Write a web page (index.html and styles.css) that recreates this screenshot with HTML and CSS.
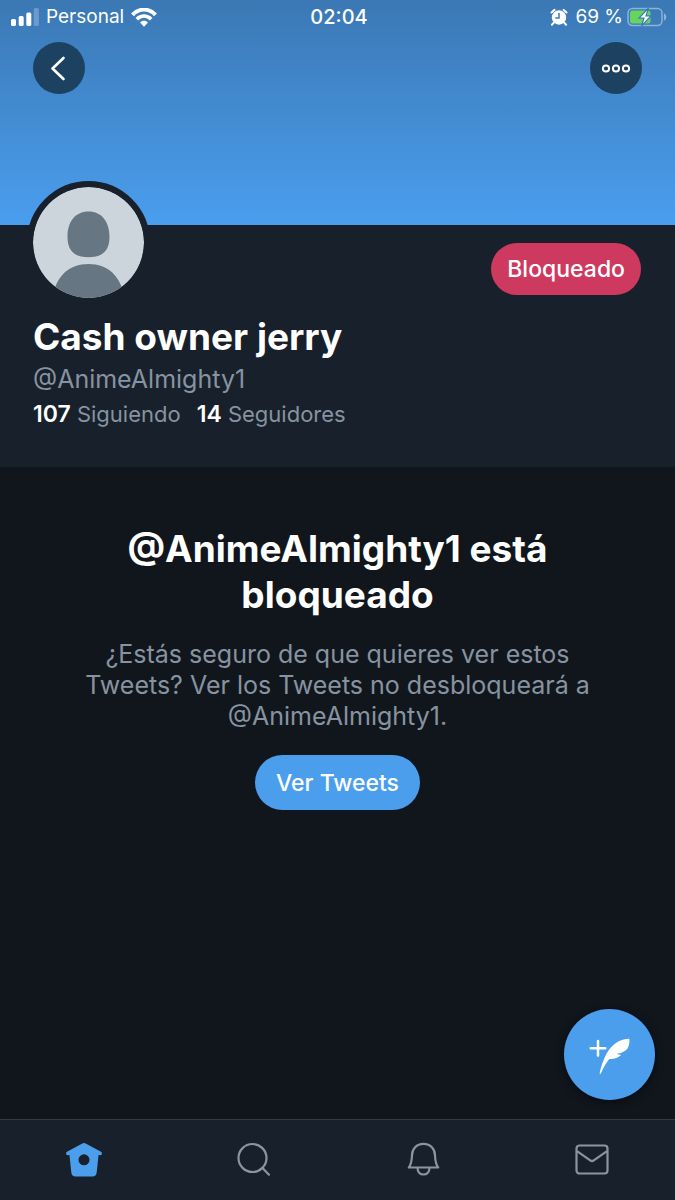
FILE: index.html
```html
<!DOCTYPE html>
<html lang="es">
<head>
<meta charset="utf-8">
<meta name="viewport" content="width=device-width, initial-scale=1">
<title>Cash owner jerry</title>
<link rel="stylesheet" href="styles.css">
</head>
<body>
<div class="app">
  <header class="banner">
    <div class="status">
      <div class="status-left">
        <svg width="28" height="18" viewBox="0 0 28 18" fill="#fff" aria-hidden="true"><rect x="0" y="11" width="5" height="7" rx="1.5"/><rect x="7.700" y="8" width="5" height="10" rx="1.500"/><rect x="15.300" y="4.500" width="5" height="13.500" rx="1.500"/><rect x="22.800" y="0" width="5" height="18" rx="1.500" opacity=".25"/></svg>
        <span>Personal</span>
        <svg width="26" height="19" viewBox="0 0 26 19" fill="none" stroke="#fff" aria-hidden="true"><path d="M1.500 6.800C8-.2 18-.2 24.500 6.800" stroke-width="4"/><path d="M5.800 11.200C9.800 7 16.200 7 20.200 11.200" stroke-width="3.600"/><path d="M9 14.500c2.300-2.200 5.700-2.200 8 0l-4 4.200z" fill="#fff" stroke="none"/></svg>
      </div>
      <time class="clock">02:04</time>
      <div class="status-right">
        <svg width="18" height="18" viewBox="0 0 18 18" aria-hidden="true"><circle cx="9" cy="9.500" r="7.200" fill="#fff"/><path d="M1.500 4.500 4.500 1.800M16.500 4.500l-3-2.700M3.500 15l-1.600 1.700M14.500 15l1.600 1.700" stroke="#fff" stroke-width="2" stroke-linecap="round"/><path d="M9 5v5H5.300" fill="none" stroke="#3c7ab7" stroke-width="1.500"/></svg>
        <span>69 %</span>
        <svg width="40" height="20" viewBox="0 0 40 20" aria-hidden="true"><rect x="1" y="1.500" width="34" height="17" rx="4.500" fill="none" stroke="#8db3d8" stroke-width="1.500"/><path d="M37 6.500c3 1 3 6 0 7z" fill="#8db3d8"/><rect x="3" y="3.500" width="20.500" height="13" rx="2.500" fill="#65d55f"/><path d="M21.500 1 12 11.200h5L14.500 19 24 8.800h-5z" fill="#fff" stroke="#3c7ab7" stroke-width="1.200"/></svg>
      </div>
    </div>
    <div class="toolbar">
      <button class="round" type="button" aria-label="Atrás"><svg width="52" height="52" viewBox="0 0 52 52" fill="none" stroke="#fff" stroke-width="2.600" stroke-linecap="round" stroke-linejoin="round"><path d="M30.500 16 19.500 26.500l11 10.500"/></svg></button>
      <button class="round" type="button" aria-label="Más opciones"><svg width="52" height="52" viewBox="0 0 52 52" fill="none" stroke="#fff" stroke-width="2"><circle cx="16" cy="26.500" r="3.100"/><circle cx="26" cy="26.500" r="3.100"/><circle cx="36" cy="26.500" r="3.100"/></svg></button>
    </div>
  </header>
  <section class="profile">
    <div class="profile-top">
      <svg class="avatar" viewBox="0 0 111 111" role="img" aria-label="Foto de perfil"><defs><clipPath id="disc"><circle cx="55.500" cy="55.500" r="55.500"/></clipPath></defs><g clip-path="url(#disc)"><path fill="#ccd5dc" d="M0 0h111v111H0z"/><path fill="#677683" d="M55.500 24.500C42 24.500 34.500 35 34.500 50C34.500 65 43 70.300 55.500 70.300S76.500 65 76.500 50C76.500 35 69 24.500 55.500 24.500zM55.500 77C34 77 20 92 19 118h73C91 92 77 77 55.500 77z"/></g></svg>
      <button class="pill blocked" type="button">Bloqueado</button>
    </div>
    <h1 class="name">Cash owner jerry</h1>
    <p class="handle">@AnimeAlmighty1</p>
    <div class="stats"><a href="#siguiendo"><b>107</b> Siguiendo</a><a href="#seguidores"><b>14</b> Seguidores</a></div>
  </section>
  <main class="notice">
    <h2 class="notice-title">@AnimeAlmighty1 está bloqueado</h2>
    <p class="notice-text">¿Estás seguro de que quieres ver estos Tweets? Ver los Tweets no desbloqueará a @AnimeAlmighty1.</p>
    <button class="pill view" type="button">Ver Tweets</button>
  </main>
  <button class="compose" type="button" aria-label="Escribir Tweet"><svg width="91" height="91" viewBox="0 0 91 91" aria-hidden="true"><path d="M34 32v14.600M26.700 39.300h14.600" stroke="#fff" stroke-width="2.500" stroke-linecap="round"/><path fill="#fff" d="M65.300 29.700C56 29.800 49 35 44.500 41.500C40.500 47.500 37 57 35.700 64.200C35.700 65.400 36.600 65.200 37 64.300C39 59 42 54 45.300 50C50 50.300 54 49 57.300 45.800C55.500 46 53.800 45.600 52.600 44.700C57 44.300 61.500 42.500 63.500 39.500C65.300 36.500 65.800 33 65.300 29.700z"/></svg></button>
  <nav class="tabs" aria-label="Principal">
    <a href="#inicio" aria-label="Inicio"><svg width="38" height="38" viewBox="0 0 38 38" fill="#4a9eec"><path fill-rule="evenodd" d="M17.800 2.300Q19 1.700 20.200 2.300L36 10.800Q37.600 11.800 36.800 13.300Q36 14.700 34.200 14L33.600 13.800 31.700 31.500Q31.200 35.500 27.500 35.500H10.500Q6.800 35.500 6.300 31.500L4.400 13.800 3.800 14Q2 14.700 1.200 13.300Q.4 11.800 2 10.800zM19 13.300a5.500 5.500 0 1 0 0 11 5.500 5.500 0 0 0 0-11z"/></svg></a>
    <a href="#buscar" aria-label="Buscar"><svg width="38" height="38" viewBox="0 0 38 38" fill="none" stroke="#8b95a1" stroke-width="2.200" stroke-linecap="round"><circle cx="18.500" cy="17" r="14"/><path d="m28.500 27 6.500 6.700"/></svg></a>
    <a href="#notificaciones" aria-label="Notificaciones"><svg width="38" height="38" viewBox="0 0 38 38" fill="none" stroke="#8b95a1" stroke-width="2.200" stroke-linejoin="round" stroke-linecap="round"><path d="M20.500 2.800C13.500 2.800 9 7.800 9 14.500C8.800 20.500 8.500 23 5.800 26.500H35.200C32.500 23 32.200 20.500 32 14.500C32 7.800 27.500 2.800 20.500 2.800zM14.500 26.800c0 4 2.400 6.700 6 6.700s6-2.700 6-6.700"/></svg></a>
    <a href="#mensajes" aria-label="Mensajes"><svg width="38" height="38" viewBox="0 0 38 38" fill="none" stroke="#8b95a1" stroke-width="2.200" stroke-linejoin="round"><rect x="4.500" y="4.500" width="31" height="28" rx="3"/><path d="M5 10.200 18.200 19.300Q20 20.700 21.800 19.300L35 10.200"/></svg></a>
  </nav>
</div>
</body>
</html>
```
FILE: styles.css
```css
* { box-sizing: border-box; }
body, h1, h2, p { margin: 0; }
body {
  background: #11161d;
  color: #fff;
  font-family: Inter, "Liberation Sans", sans-serif;
}
button { border: 0; padding: 0; color: #fff; font: inherit; cursor: pointer; }
a { color: inherit; text-decoration: none; }
svg { display: block; flex: none; }

.app {
  display: flex;
  flex-direction: column;
  min-height: 100vh;
  position: relative;
}
.banner {
  padding-bottom: 131px;
  background: linear-gradient(#3b78b4, #4a9eee);
}
.status {
  display: grid;
  grid-template-columns: 1fr auto 1fr;
  align-items: center;
  height: 34px;
  padding: 0 8px 0 11px;
  font-size: 19px;
  line-height: 24px;
}
.status-left, .status-right { display: flex; align-items: center; gap: 7px; }
.status-right { justify-content: flex-end; }
.status-right span { margin-right: -3px; }
.clock { font-size: 20px; font-weight: 500; }
.toolbar {
  display: flex;
  justify-content: space-between;
  padding: 8px 33px 0;
}
.round {
  width: 52px;
  height: 52px;
  border-radius: 50%;
  background: #1d4161;
}

.profile {
  padding: 0 34px 37px 33px;
  background: #18202b;
}
.profile-top {
  display: flex;
  justify-content: space-between;
  align-items: flex-end;
  margin-top: -44px;
}
.avatar {
  box-sizing: content-box;
  width: 111px;
  height: 111px;
  margin-left: -6px;
  border: 6px solid #18202b;
  border-radius: 50%;
  background: #18202b;
}
.pill {
  border-radius: 28px;
  font-size: 23px;
  font-weight: 500;
}
.blocked {
  height: 52px;
  margin-bottom: 9px;
  padding: 0 16px;
  background: #ce395f;
}
.name {
  margin-top: 10px;
  font-size: 37px;
  line-height: 46px;
  font-weight: 700;
}
.handle {
  margin-top: 3px;
  color: #8793a0;
  font-size: 25px;
  line-height: 32px;
}
.stats {
  display: flex;
  gap: 16px;
  margin-top: 4px;
  color: #8793a0;
  font-size: 22px;
  line-height: 31px;
}
.stats b { font-size: 23px; color: #fff; font-weight: 600; }

.notice {
  flex: 1;
  display: flex;
  flex-direction: column;
  align-items: center;
  padding: 59px 80px 160px;
  text-align: center;
}
.notice-title {
  max-width: 500px;
  font-size: 37px;
  line-height: 46px;
  font-weight: 700;
}
.notice-text {
  max-width: 520px;
  margin-top: 21px;
  color: #8793a0;
  font-size: 25px;
  line-height: 31px;
}
.view {
  height: 55px;
  margin-top: 23px;
  padding: 0 21px;
  background: #4a9eec;
}
.compose {
  position: absolute;
  right: 20px;
  bottom: 100px;
  width: 91px;
  height: 91px;
  border-radius: 50%;
  background: #4a9eec;
  box-shadow: 0 2px 8px #080c11;
}
.tabs {
  display: grid;
  grid-template-columns: repeat(4, 1fr);
  height: 81px;
  border-top: 1px solid #303b43;
  background: #18202b;
}
.tabs a { display: grid; place-items: center; }
```
